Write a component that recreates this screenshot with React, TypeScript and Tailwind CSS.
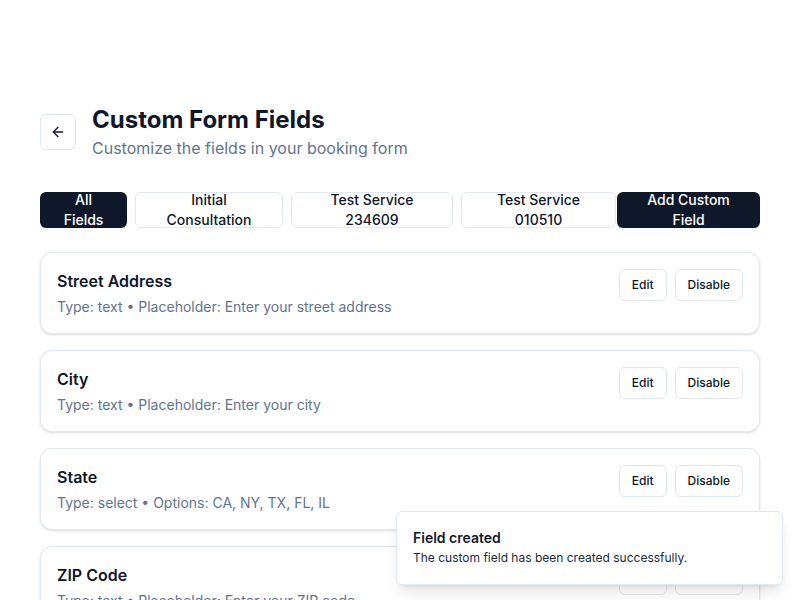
import { ArrowLeft } from "lucide-react";

interface Field {
  name: string;
  meta: string;
}

const fields: Field[] = [
  { name: "Street Address", meta: "Type: text • Placeholder: Enter your street address" },
  { name: "City", meta: "Type: text • Placeholder: Enter your city" },
  { name: "State", meta: "Type: select • Options: CA, NY, TX, FL, IL" },
  { name: "ZIP Code", meta: "Type: text • Placeholder: Enter your ZIP code" },
];

const tabs = [
  { label: "All Fields", w: "w-[87px]", active: true },
  { label: "Initial Consultation", w: "w-[148px]", active: false },
  { label: "Test Service 234609", w: "w-[162px]", active: false },
  { label: "Test Service 010510", w: "w-[155px]", active: false },
];

export default function App() {
  return (
    <div
      className="relative h-[600px] overflow-hidden bg-white text-[#0f172a]"
      style={{ fontFamily: "Inter, 'Noto Sans', sans-serif" }}
    >
      <div className="px-10 pt-[104px]">
        {/* header */}
        <div className="flex items-center gap-4">
          <button className="flex h-9 w-9 items-center justify-center rounded-md border border-slate-200 bg-white">
            <ArrowLeft size={16} strokeWidth={2} />
          </button>
          <div>
            <h1 className="text-2xl font-bold leading-8">Custom Form Fields</h1>
            <p className="text-base leading-6 text-slate-500">Customize the fields in your booking form</p>
          </div>
        </div>

        {/* tabs */}
        <div className="mt-8 flex items-center justify-between">
          <div className="flex gap-2">
            {tabs.map((t) => (
              <button
                key={t.label}
                className={
                  t.active
                    ? `${t.w} flex h-9 items-center justify-center rounded-md bg-[#0f172a] px-4 text-center text-sm font-medium leading-5 text-white`
                    : `${t.w} flex h-9 items-center justify-center rounded-md border border-slate-200 bg-white px-4 text-center text-sm font-medium leading-5`
                }
              >
                {t.label}
              </button>
            ))}
          </div>
          <button className="flex h-9 w-[143px] items-center justify-center rounded-md bg-[#0f172a] px-4 text-center text-sm font-medium leading-5 text-white">
            Add Custom Field
          </button>
        </div>

        {/* field list */}
        <div className="mt-6 flex flex-col gap-4">
          {fields.map((f) => (
            <div
              key={f.name}
              className="flex items-start justify-between rounded-xl border border-slate-200 bg-white p-4 shadow-sm"
            >
              <div>
                <div className="text-base font-semibold leading-6">{f.name}</div>
                <div className="mt-1 text-sm leading-5 text-slate-500">{f.meta}</div>
              </div>
              <div className="flex gap-2">
                <button className="h-8 rounded-md border border-slate-200 bg-white px-3 text-xs font-medium">Edit</button>
                <button className="h-8 rounded-md border border-slate-200 bg-white px-3 text-xs font-medium">Disable</button>
              </div>
            </div>
          ))}
        </div>
      </div>

      {/* toast */}
      <div className="absolute bottom-[15px] right-[17px] w-[387px] rounded-md border border-slate-200 bg-white p-4 shadow-lg">
        <div className="text-sm font-semibold leading-5">Field created</div>
        <div className="text-xs leading-5 text-slate-800">The custom field has been created successfully.</div>
      </div>
    </div>
  );
}
